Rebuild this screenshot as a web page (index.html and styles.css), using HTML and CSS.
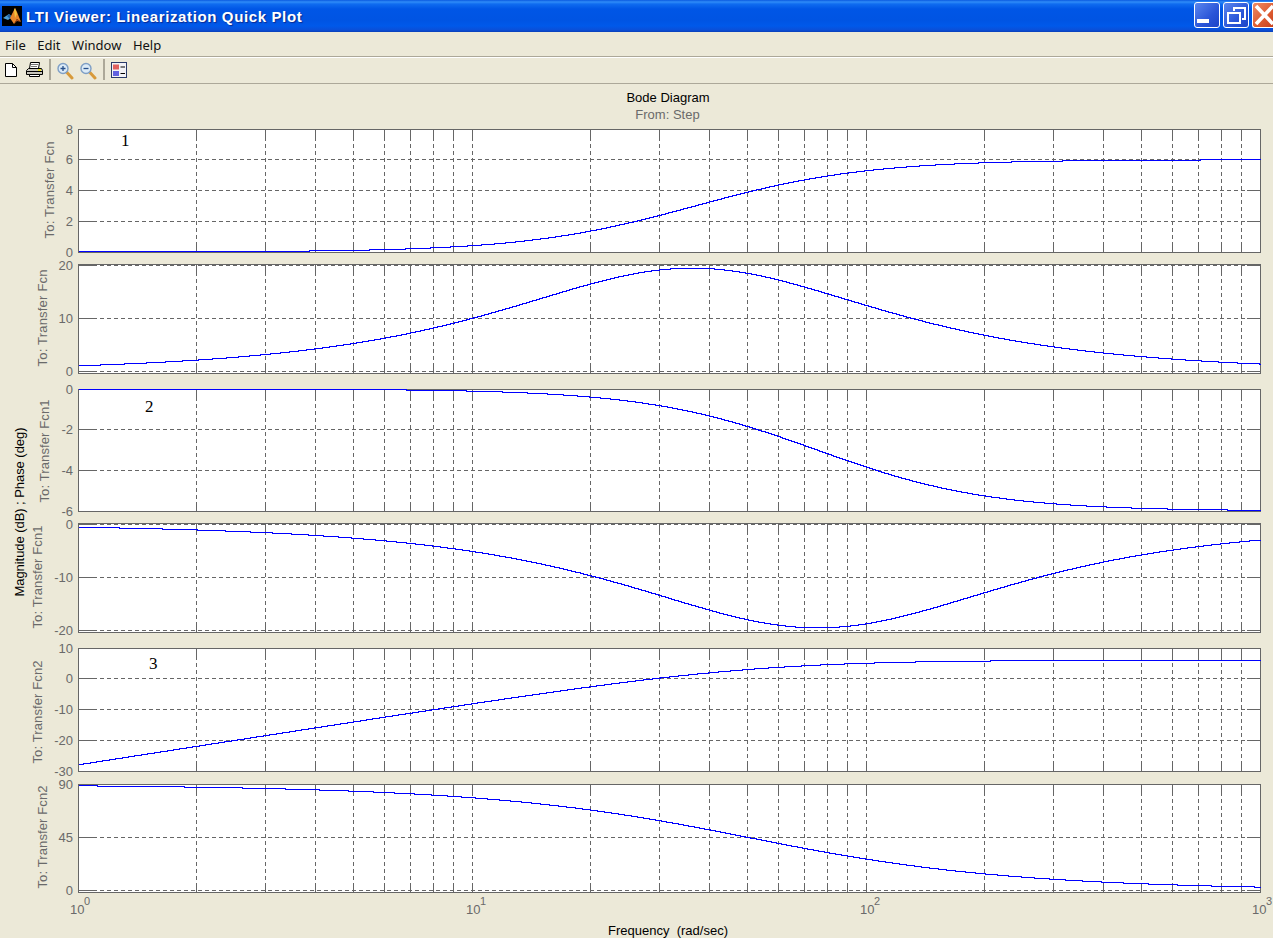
FILE: index.html
```html
<!doctype html>
<html lang="en">

<head>
    <meta charset="utf-8">
    <title>LTI Viewer: Linearization Quick Plot</title>
    <meta name="viewport" content="width=device-width, initial-scale=1">
    <link rel="stylesheet" href="styles.css">
</head>

<body>
    <div class="window">
        <div class="titlebar">
            <svg class="app-icon" width="20" height="20" viewBox="0 0 20 20">
                <rect width="20" height="20" fill="#000"></rect>
                <path d="M1 12 L7 8 L10 11 L6 14 Z" fill="#4a9fd8"></path>
                <path d="M7 8 L10 11 L8 13 L5 10 Z" fill="#1f5f9c"></path>
                <path d="M8 12 L13 2 L15 6 L19 16 L15 13 L12 18 Z" fill="#e8862a"></path>
                <path d="M12 4 L13 2 L15 8 L13 12 Z" fill="#f4c23c"></path>
                <path d="M12 18 L15 13 L19 16 L15 15 Z" fill="#b4501a"></path>
            </svg>
            <span class="titlebar__text">LTI Viewer: Linearization Quick Plot</span>
            <div class="titlebar__buttons">
                <div class="win-btn">
                    <span class="win-btn__min"></span>
                </div>
                <div class="win-btn">
                    <svg width="24" height="24" viewBox="0 0 24 24">
                        <path d="M10 8 V5 H21 V16 H18" fill="none" stroke="#fff" stroke-width="2"></path>
                        <rect x="4" y="10" width="12" height="10" fill="none" stroke="#fff" stroke-width="2"></rect>
                    </svg>
                </div>
                <div class="win-btn win-btn--close">
                    <svg width="21" height="26" viewBox="0 0 21 26">
                        <path d="M3 4 L20 22 M20 4 L3 22" stroke="#fff" stroke-width="3.6" fill="none"></path>
                    </svg>
                </div>
            </div>
        </div>

        <div class="menubar">
            <span>File</span>
            <span>Edit</span>
            <span>Window</span>
            <span>Help</span>
        </div>

        <div class="toolbar">
            <svg class="tool tool--new" width="12" height="14" viewBox="0 0 12 14">
                <path d="M0.5 0.5 H7.5 L11.5 4.5 V13.5 H0.5 Z" fill="#fff" stroke="#000"></path>
                <path d="M7.5 0.5 V4.5 H11.5" fill="none" stroke="#000"></path>
            </svg>
            <svg class="tool tool--print" width="17" height="15" viewBox="0 0 17 15">
                <path d="M4.5 0.5 H13.5 L12.5 6.5 H3.5 Z" fill="#fff" stroke="#000"></path>
                <path d="M5 2.5 H12 M5 4.5 H11" stroke="#777"></path>
                <path d="M2.5 6.5 H15.5 L16.5 8.5 V12.5 H0.5 V8.5 Z" fill="#c9c7bd" stroke="#000"></path>
                <path d="M1 9.5 H16" stroke="#000"></path>
                <rect x="12" y="7" width="3" height="2" fill="#e8e020"></rect>
                <path d="M3.5 12.5 H13.5 V14.5 H3.5 Z" fill="#fff" stroke="#000"></path>
            </svg>
            <span class="tool-sep"></span>
            <svg class="tool tool--zoom" width="17" height="18" viewBox="0 0 17 18">
                <path d="M9.5 10 L15 16" stroke="#d89a3a" stroke-width="3" stroke-linecap="round"></path>
                <circle cx="6" cy="6.5" r="5" fill="#dcebf7" stroke="#7f9fc5" stroke-width="1.4"></circle>
                <path d="M3.5 6.5 H8.5 M6 4 V9" stroke="#27508c" stroke-width="1.3"></path>
            </svg>
            <svg class="tool tool--zoom" width="17" height="18" viewBox="0 0 17 18">
                <path d="M9.5 10 L15 16" stroke="#d89a3a" stroke-width="3" stroke-linecap="round"></path>
                <circle cx="6" cy="6.5" r="5" fill="#dcebf7" stroke="#7f9fc5" stroke-width="1.4"></circle>
                <path d="M3.5 6.5 H8.5" stroke="#27508c" stroke-width="1.3"></path>
            </svg>
            <span class="tool-sep"></span>
            <svg class="tool tool--legend" width="16" height="16" viewBox="0 0 16 16">
                <rect x="0.5" y="0.5" width="15" height="15" fill="#f2f2f6" stroke="#2a3a6a"></rect>
                <rect x="2" y="2.500" width="6" height="5" fill="#e06060"></rect>
                <rect x="2" y="9" width="6" height="5" fill="#6060e0"></rect>
                <path d="M9.500 5 H14 M9.500 11.500 H14" stroke="#000"></path>
            </svg>
        </div>

        <svg id="figure" class="figure" viewBox="0 84 1273 854" width="1273" height="854"></svg>
    </div>

    <script src="plot.js"></script>
</body>

</html>
```

FILE: styles.css
```css
* {
    box-sizing: border-box;
}

html,
body {
    margin: 0;
    height: 100%;
    overflow: hidden;
}

body {
    background-color: #ece9d8;
    font-family: "Liberation Sans", Arial, sans-serif;
}

.window {
    display: flex;
    flex-direction: column;
    width: 1273px;
    height: 938px;
    overflow: hidden;
}

.titlebar {
    display: flex;
    align-items: center;
    flex: none;
    height: 32px;
    padding-left: 2px;
    background: linear-gradient(#0a5ae0 0, #2f8cf8 2px, #0f6cf0 4px, #0056e6 9px, #0054e3 20px, #0059ea 26px, #0a4fd8 30px, #0a3fb8 32px);
}

.app-icon {
    flex: none;
    margin-top: -1px;
}

.titlebar__text {
    margin-left: 4px;
    color: #fff;
    font-size: 15px;
    font-weight: 700;
    letter-spacing: 0.63px;
    text-shadow: 1px 1px 1px #0a2a90;
    white-space: nowrap;
}

.titlebar__buttons {
    display: flex;
    gap: 3px;
    margin-left: auto;
    margin-top: -3px;
    margin-right: -1px;
}

.win-btn {
    display: flex;
    align-items: center;
    justify-content: center;
    width: 26px;
    height: 26px;
    border: 1px solid #fff;
    border-radius: 3px;
    background: linear-gradient(135deg, #5a86ee, #2a55d8 60%, #1c44c8);
}

.win-btn__min {
    display: block;
    width: 12px;
    height: 4px;
    margin: 13px 8px 0 0;
    background-color: #fff;
}

.win-btn--close {
    width: 22px;
    background: linear-gradient(135deg, #ee8a66, #dc5a30 60%, #c8401c);
    border-right: 0;
    border-radius: 3px 0 0 3px;
}

.menubar {
    display: flex;
    flex: none;
    gap: 11.5px;
    align-items: center;
    height: 25px;
    padding: 1px 0 0 5px;
    border-bottom: 1px solid #aca899;
    color: #111;
    font-family: "Noto Sans", sans-serif;
    font-size: 13px;
}

.toolbar {
    display: flex;
    flex: none;
    align-items: center;
    height: 27px;
    padding: 0 0 2px 5px;
    border-top: 1px solid #fff;
    border-bottom: 1px solid #aca899;
}

.tool {
    flex: none;
}

.tool--print {
    margin-left: 9px;
}

.tool--zoom {
    margin-left: 6px;
    margin-top: 2px;
}

.tool-sep {
    width: 2px;
    height: 21px;
    margin-left: 6px;
    background-color: #aca899;
}

.tool--legend {
    margin-left: 6px;
}

.figure {
    display: block;
    flex: none;
    background-color: #ece9d8;
}

.axes-box {
    fill: #fff;
    stroke: #666;
    shape-rendering: crispEdges;
}

.grid-line {
    stroke: #666;
    stroke-dasharray: 4 3;
    shape-rendering: crispEdges;
}

.tick-line {
    stroke: #666;
    shape-rendering: crispEdges;
}

.curve {
    fill: none;
    stroke: #0000ff;
    shape-rendering: crispEdges;
}

.label {
    font-family: "Liberation Sans", Arial, sans-serif;
    font-size: 13px;
    fill: #6a6a6a;
    white-space: pre;
}

.label--tick {
    text-anchor: end;
}

.label--center {
    text-anchor: middle;
}

.label--dark {
    fill: #000;
}

.label--note {
    font-family: "Liberation Serif", "Times New Roman", serif;
    font-size: 17px;
    fill: #000;
}

.label--exp {
    font-size: 11px;
}
```

FILE: plot.js
```js
var NS = "http://www.w3.org/2000/svg";
var figure = document.getElementById("figure");

var X0 = 78.5;
var X1 = 1260.5;
var DECADE = 394;

function add(name, attrs, text) {
    var el = document.createElementNS(NS, name);
    for (var key in attrs) {
        el.setAttribute(key, attrs[key]);
    }
    if (text !== undefined) {
        el.textContent = text;
    }
    figure.appendChild(el);
    return el;
}

function line(cls, x1, y1, x2, y2) {
    add("line", { "class": cls, x1: x1, y1: y1, x2: x2, y2: y2 });
}

function label(cls, x, y, text) {
    return add("text", { "class": "label " + cls, x: x, y: y }, text);
}

function vlabel(text, x, y, width, cls) {
    add("text", {
        "class": "label label--center " + (cls || ""),
        transform: "translate(" + x + " " + y + ") rotate(-90)",
        textLength: width,
        lengthAdjust: "spacing"
    }, text);
}

// pixel column of a frequency gridline
function xOf(w) {
    return Math.floor(78 + DECADE * Math.log10(w)) + 0.5;
}

// ticks are [label, pixel y]; value is mapped between the first and last tick
var axes = [{
    top: 129, bottom: 252, title: "To: Transfer Fcn", tx: 54, ty: 190,
    ticks: [["8", 129], ["6", 159.5], ["4", 190.5], ["2", 221.5], ["0", 252]],
    range: [8, 0],
    f: function(w) { return 6 * w * w / (w * w + 1347); }
}, {
    top: 264.5, bottom: 373, title: "To: Transfer Fcn", tx: 47, ty: 318,
    ticks: [["20", 265.5], ["10", 318.5], ["0", 371.5]],
    range: [20, 0],
    f: function(w) { var r = w / 36; return 39 * r / (1 + r * r); }
}, {
    top: 389, bottom: 511, title: "To: Transfer Fcn1", tx: 49, ty: 451,
    ticks: [["0", 389], ["-2", 429.5], ["-4", 470.5], ["-6", 511]],
    range: [0, -6],
    f: function(w) { return -6 * w * w / (w * w + 5580); }
}, {
    top: 523.5, bottom: 632, title: "To: Transfer Fcn1", tx: 42, ty: 577,
    ticks: [["0", 524.5], ["-10", 577.5], ["-20", 630.5]],
    range: [0, -20],
    f: function(w) { var r = w / 75; return -39 * r / (1 + r * r); }
}, {
    top: 648, bottom: 771, title: "To: Transfer Fcn2", tx: 42, ty: 712,
    ticks: [["10", 648], ["0", 678.5], ["-10", 709.5], ["-20", 740.5], ["-30", 771]],
    range: [10, -30],
    f: function(w) { var r = w / 50; return 20 * Math.log10(2 * r / Math.sqrt(1 + r * r)); }
}, {
    top: 784, bottom: 892, title: "To: Transfer Fcn2", tx: 47, ty: 837,
    ticks: [["90", 784.5], ["45", 837.5], ["0", 890.5]],
    range: [90, 0],
    f: function(w) { return Math.atan(50 / w) * 180 / Math.PI; }
}];

var freqs = [];
[1, 10, 100].forEach(function(d) {
    for (var i = 1; i < 10; i++) {
        if (d * i > 1) {
            freqs.push(d * i);
        }
    }
});

axes.forEach(function(ax) {
    var top = Math.floor(ax.top) + 0.5;
    var bottom = Math.floor(ax.bottom) + 0.5;
    add("rect", { "class": "axes-box", x: X0, y: top, width: X1 - X0, height: bottom - top });

    freqs.forEach(function(w) {
        var x = xOf(w);
        line("grid-line", x, top, x, bottom);
        line("tick-line", x, top, x, top + 10);
        line("tick-line", x, bottom - 10, x, bottom);
    });

    ax.ticks.forEach(function(t) {
        var y = Math.floor(t[1]) + 0.5;
        if (y !== top && y !== bottom) {
            line("grid-line", X0, y, X1, y);
            line("tick-line", X0, y, X0 + 14, y);
            line("tick-line", X1 - 14, y, X1, y);
        }
        label("label--tick", 73, t[1] + 4.5, t[0]);
    });

    // the curve is drawn as pixel stairs, the way the plot window rasterises it
    var yFirst = ax.ticks[0][1];
    var yLast = ax.ticks[ax.ticks.length - 1][1];
    var d = "";
    for (var px = 0; px <= X1 - X0; px += 1) {
        var w = Math.pow(10, px / DECADE);
        var v = ax.f(w);
        var y = yFirst + (v - ax.range[0]) / (ax.range[1] - ax.range[0]) * (yLast - yFirst);
        y = Math.floor(y) + 0.5;
        d += (px === 0 ? "M" + X0 + " " + y : " H" + (X0 + px) + " V" + y);
    }
    add("path", { "class": "curve", d: d });

    vlabel(ax.title, ax.tx, ax.ty, ax.title.length > 16 ? 103 : 97);
});

// decade labels under the last axes
[[0, 70], [1, 466], [2, 860], [3, 1252]].forEach(function(d) {
    label("", d[1], 914, "10");
    label("label--exp", d[1] + 14, 905, String(d[0]));
});

label("label--center label--dark", 668, 102, "Bode Diagram");
label("label--center", 667.5, 119, "From: Step");
label("label--center label--dark", 668, 935, "Frequency  (rad/sec)");
vlabel("Magnitude (dB) ; Phase (deg)", 24, 512, 169, "label--dark");

label("label--note", 121, 146, "1");
label("label--note", 145, 412, "2");
label("label--note", 149, 669, "3");
```
